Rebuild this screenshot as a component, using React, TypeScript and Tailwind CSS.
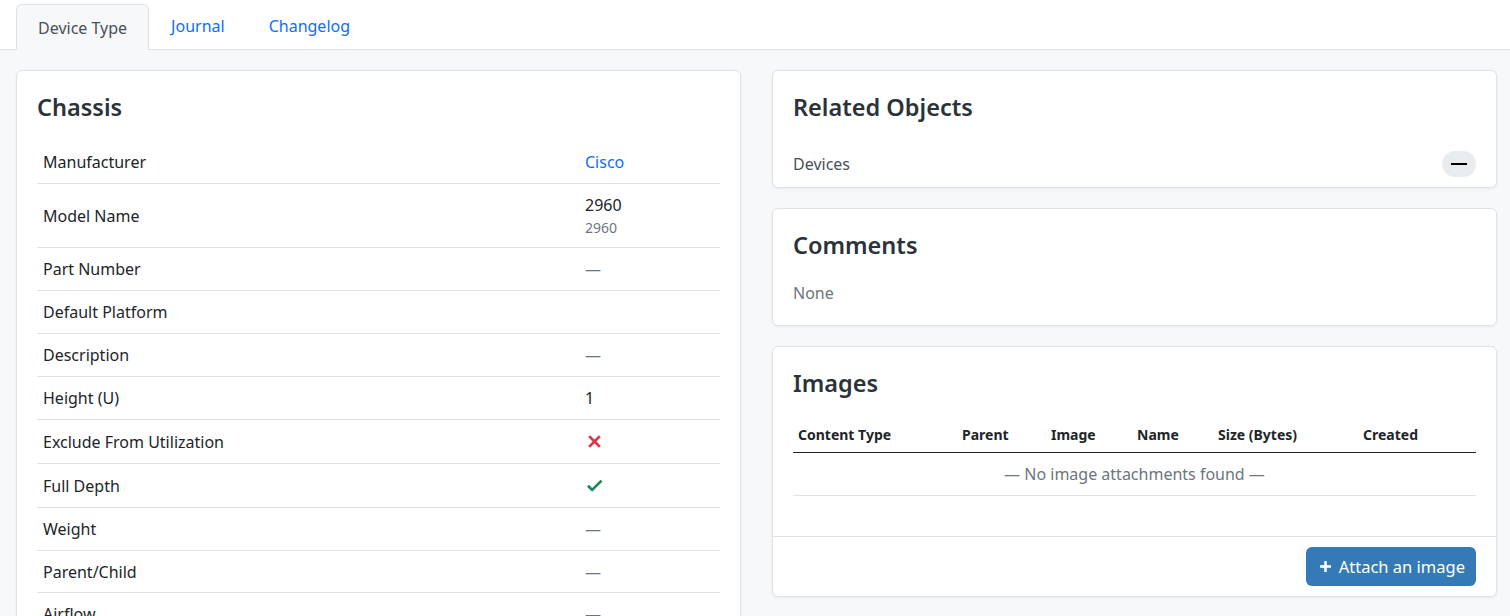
import type { ReactNode } from 'react'

const font = { fontFamily: '"Noto Sans", "Open Sans", sans-serif' }

function Dash() {
  return <span className="text-[#6c757d]">—</span>
}

function CloseIcon() {
  return (
    <span className="flex h-[25px] items-center">
      <svg viewBox="0 0 24 24" className="h-[19px] w-[19px] fill-[#dc3545]">
        <path d="M19,6.41L17.59,5L12,10.59L6.41,5L5,6.41L10.59,12L5,17.59L6.41,19L12,13.41L17.59,19L19,17.59L13.41,12L19,6.41Z" stroke="#dc3545" strokeWidth="1.4" />
      </svg>
    </span>
  )
}

function CheckIcon() {
  return (
    <span className="flex h-[25px] items-center">
      <svg viewBox="0 0 24 24" className="h-[19px] w-[19px] fill-[#198754]">
        <path d="M21,7L9,19L3.5,13.5L4.91,12.09L9,16.17L19.59,5.59L21,7Z" stroke="#198754" strokeWidth="1.4" />
      </svg>
    </span>
  )
}

function Card({ title, children, className = '' }: { title: string; children: ReactNode; className?: string }) {
  return (
    <div className={`rounded-md border border-[#dfe3e8] bg-white shadow-[0_1px_3px_rgba(0,0,0,0.06)] ${className}`}>
      <div className="px-5 pt-5">
        <h2 className="text-[23.5px] font-semibold leading-8 text-[#2b323a]">{title}</h2>
      </div>
      {children}
    </div>
  )
}

const rows: { label: string; value: ReactNode; tight?: boolean }[] = [
  { label: 'Manufacturer', value: <a className="text-[#0d6efd]">Cisco</a> },
  {
    label: 'Model Name',
    value: (
      <div>
        <div>2960</div>
        <div className="text-[14px] leading-[21px] text-[#6c757d]">2960</div>
      </div>
    ),
  },
  { label: 'Part Number', value: <Dash /> },
  { label: 'Default Platform', value: null },
  { label: 'Description', value: <Dash /> },
  { label: 'Height (U)', value: '1' },
  { label: 'Exclude From Utilization', value: <CloseIcon /> },
  { label: 'Full Depth', value: <CheckIcon /> },
  { label: 'Weight', value: <Dash /> },
  { label: 'Parent/Child', value: <Dash />, tight: true },
  { label: 'Airflow', value: <Dash /> },
]

const imageCols = [
  { name: 'Content Type', w: 'w-[164px]' },
  { name: 'Parent', w: 'w-[89px]' },
  { name: 'Image', w: 'w-[86px]' },
  { name: 'Name', w: 'w-[81px]' },
  { name: 'Size (Bytes)', w: 'w-[145px]' },
  { name: 'Created', w: 'flex-1' },
]

export default function App() {
  return (
    <div style={font} className="min-h-screen bg-[#f6f8fa] text-[16px] leading-6 text-[#212529]">
      <div className="flex h-[50px] items-end border-b border-[#dee2e6] bg-white pl-4">
        <div className="-mb-px flex h-[46px] items-center rounded-t-md border border-b-0 border-[#dee2e6] bg-[#f6f8fa] px-[21px] text-[#495057]">
          Device Type
        </div>
        <div className="flex h-[46px] items-center px-[22px] text-[#0d6efd]">Journal</div>
        <div className="flex h-[46px] items-center px-[22px] text-[#0d6efd]">Changelog</div>
      </div>

      <div className="flex gap-[31px] pl-4 pt-5">
        <Card title="Chassis" className="w-[725px] self-start">
          <div className="mt-[18px] px-5">
            {rows.map((r) => (
              <div
                key={r.label}
                className={`grid grid-cols-[542px_1fr] border-b border-[#dee2e6] ${r.tight ? 'min-h-[42px]' : ''}`}
              >
                <div className={`flex items-center px-[6px] ${r.tight ? 'py-[8.5px]' : 'py-[9px]'}`}>{r.label}</div>
                <div className={`flex items-center px-[6px] ${r.tight ? 'py-[8.5px]' : 'py-[9px]'}`}>{r.value}</div>
              </div>
            ))}
          </div>
          <div className="h-5" />
        </Card>

        <div className="flex w-[725px] flex-col gap-5">
          <Card title="Related Objects">
            <div className="mt-[17px] flex h-[47px] items-center justify-between px-5 text-[#495057]">
              <span>Devices</span>
              <span className="flex h-[26px] w-[34px] items-center justify-center rounded-full bg-[#e9ecef]">
                <span className="h-[2px] w-4 bg-black" />
              </span>
            </div>
          </Card>

          <Card title="Comments">
            <div className="mt-5 px-5 pb-5 text-[#6c757d]">None</div>
          </Card>

          <Card title="Images">
            <div className="mt-[18px] px-5 pb-10">
              <div className="flex border-b border-[#212529] text-[14px] font-bold leading-[21px] text-[#212529]">
                {imageCols.map((c) => (
                  <div key={c.name} className={`${c.w} px-[5px] py-[7px]`}>
                    {c.name}
                  </div>
                ))}
              </div>
              <div className="border-b border-[#dee2e6] py-[9px] text-center text-[#6c757d]">
                — No image attachments found —
              </div>
            </div>
            <div className="flex justify-end border-t border-[#dee2e6] px-5 py-[10px]">
              <button className="flex h-[39px] items-center gap-[5px] rounded-md bg-[#337ab7] px-[11px] text-[16.5px] text-white">
                <svg viewBox="0 0 24 24" className="h-[17px] w-[17px] fill-white">
                  <path d="M19,13H13V19H11V13H5V11H11V5H13V11H19V13Z" stroke="white" strokeWidth="1.5" />
                </svg>
                Attach an image
              </button>
            </div>
          </Card>
        </div>
      </div>
    </div>
  )
}
